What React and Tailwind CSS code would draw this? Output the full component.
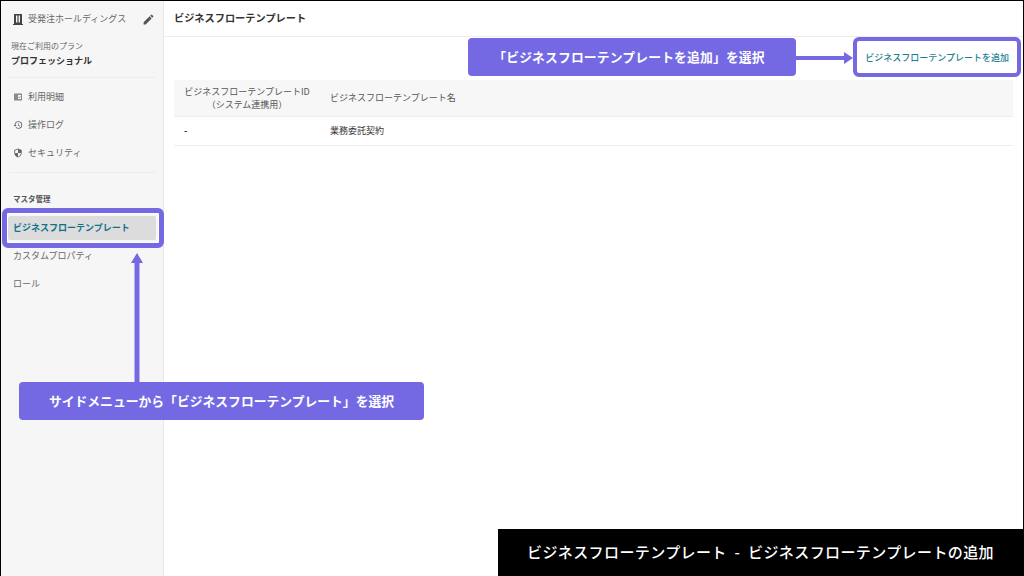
import { MdEdit, MdHistory, MdSecurity } from 'react-icons/md';

const JP = { fontFamily: '"Noto Sans CJK JP", "Noto Sans", sans-serif' };

function BuildingIcon() {
  return (
    <svg width="10" height="11" viewBox="0 0 10 11" className="text-[#444]">
      <path fill="currentColor" fillRule="evenodd" d="M1 0H9V10H10V11H0V10H1ZM3 1.5V8.5H4.4V1.5ZM5.6 1.5V8.5H7V1.5Z" />
    </svg>
  );
}

function ReceiptIcon({ size, className }) {
  return (
    <svg width={size} height={size} viewBox="0 0 10 10" className={className}>
      <path fill="currentColor" fillRule="evenodd" d="M1 1.5H9V8.5H1ZM5 3V7H8V3Z" opacity="0.75" />
      <path stroke="currentColor" strokeWidth="0.8" fill="none" d="M5.6 5.2L6.3 5.9L7.4 4.4" />
    </svg>
  );
}

function NavItem({ icon: Icon, label }) {
  return (
    <div className="flex h-[28px] items-center gap-[5px] pl-[12px] text-[9px] text-[#666]">
      <Icon size={10} className="text-[#666]" />
      <span>{label}</span>
    </div>
  );
}

function Sidebar() {
  return (
    <aside className="flex w-[163px] shrink-0 flex-col border-r border-[#e8e8e8] bg-[#f6f6f6]">
      <div className="flex h-[36px] items-center justify-between pl-[12px] pr-[8px] text-[9px] text-[#666]">
        <div className="flex items-center gap-[5px]">
          <BuildingIcon />
          <span>受発注ホールディングス</span>
        </div>
        <MdEdit size={13} className="text-[#555]" />
      </div>
      <div className="px-[10px] pt-[3px]">
        <div className="text-[8px] leading-[12px] text-[#666]">現在ご利用のプラン</div>
        <div className="mt-[2px] text-[9px] font-bold leading-[13px] text-[#333]">プロフェッショナル</div>
      </div>
      <div className="mx-[8px] mt-[10px] border-t border-[#ececec]" />
      <div className="mt-[5px]">
        <NavItem icon={ReceiptIcon} label="利用明細" />
        <NavItem icon={MdHistory} label="操作ログ" />
        <NavItem icon={MdSecurity} label="セキュリティ" />
      </div>
      <div className="mx-[8px] mt-[5px] border-t border-[#ececec]" />
      <div className="mt-[20px] pl-[12px] text-[7.5px] font-bold leading-[12px] text-[#555]">マスタ管理</div>
      <div className="ml-[7px] mr-[7px] mt-[11px] flex h-[24px] items-center rounded-[2px] bg-[#dcdcdc] pl-[5px] text-[9px] font-bold text-[#0f7286]">
        ビジネスフローテンプレート
      </div>
      <div className="mt-[2px] flex h-[28px] items-center pl-[12px] text-[9px] text-[#666]">カスタムプロパティ</div>
      <div className="flex h-[28px] items-center pl-[12px] text-[9px] text-[#666]">ロール</div>
    </aside>
  );
}

function Content() {
  return (
    <main className="flex min-w-0 flex-1 flex-col bg-white">
      <div className="flex h-[36px] items-center border-b border-[#eeeeee] pb-[2px] pl-[10px] text-[10.2px] font-bold text-[#333]">
        ビジネスフローテンプレート
      </div>
      <div className="flex h-[43px] items-center justify-end pb-[2px] pr-[14px]">
        <span className="text-[9px] font-medium text-[#1d7f92]">ビジネスフローテンプレートを追加</span>
      </div>
      <div className="mx-[10px] text-[9px] text-[#555]">
        <div className="flex h-[37px] items-center border-b border-[#eeeeee] bg-[#f7f7f7]">
          <div className="mr-[10px] w-[146px] text-center leading-[13px]">
            ビジネスフローテンプレートID
            <br />
            （システム連携用）
          </div>
          <div>ビジネスフローテンプレート名</div>
        </div>
        <div className="flex h-[29px] items-center border-b border-[#eeeeee] text-[#333]">
          <div className="w-[156px] pl-[10px] font-bold">-</div>
          <div>業務委託契約</div>
        </div>
      </div>
    </main>
  );
}

function Callout({ className, children }) {
  return (
    <div className={`absolute flex items-center justify-center rounded-[4px] bg-[#7469e3] text-[12.8px] font-bold text-white ${className}`}>
      {children}
    </div>
  );
}

export default function App() {
  return (
    <div style={JP} className="relative flex h-[576px] w-[1024px] overflow-hidden border-l border-t border-r border-black bg-white">
      <Sidebar />
      <Content />

      {/* 注釈レイヤー */}
      <div className="absolute left-[1px] top-[207px] h-[40px] w-[162px] rounded-[6px] border-[5px] border-[#7469e3] shadow-[inset_0_0_0_1px_white]" />
      <div className="absolute left-[852px] top-[36px] h-[40px] w-[168px] rounded-[6px] border-[4px] border-[#7469e3]" />

      <Callout className="left-[467px] top-[37px] h-[38px] w-[328px] pr-[6px] tracking-[0.15px]">「ビジネスフローテンプレートを追加」を選択</Callout>
      <Callout className="left-[18px] top-[381px] h-[38px] w-[405px]">サイドメニューから「ビジネスフローテンプレート」を選択</Callout>

      <svg className="absolute left-[795px] top-[50px]" width="58" height="14" viewBox="0 0 58 14">
        <path d="M0 5H48V1L57 7L48 13V9H0Z" fill="#7469e3" />
      </svg>
      <svg className="absolute left-[129px] top-[252px]" width="14" height="130" viewBox="0 0 14 130">
        <path d="M7 0L13 10H9.5V130H4.5V10H1Z" fill="#7469e3" />
      </svg>

      <div className="absolute bottom-0 right-0 flex h-[47px] w-[525px] items-center justify-center bg-black text-[15px] font-medium tracking-[0.4px] text-white [word-spacing:4px]">
        ビジネスフローテンプレート - ビジネスフローテンプレートの追加
      </div>
    </div>
  );
}
